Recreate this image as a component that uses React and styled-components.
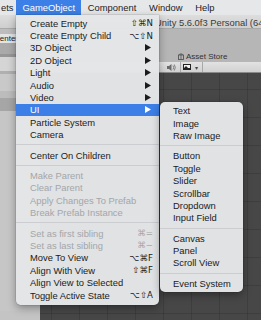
import React from "react"
import styled, { createGlobalStyle } from "styled-components"

const GlobalStyle = createGlobalStyle`
  html, body {
    margin: 0;
    padding: 0;
    background: #c4c4c4;
  }
  body {
    font-family: "Liberation Sans", Arial, sans-serif;
  }
`

const mainItems = [
  { label: "Create Empty", key: "⇧⌘N" },
  { label: "Create Empty Child", key: "⌥⇧N" },
  { label: "3D Object", sub: true },
  { label: "2D Object", sub: true },
  { label: "Light", sub: true },
  { label: "Audio", sub: true },
  { label: "Video", sub: true },
  { label: "UI", sub: true, active: true },
  { label: "Particle System" },
  { label: "Camera" },
  { sep: true },
  { label: "Center On Children" },
  { sep: true },
  { label: "Make Parent", disabled: true },
  { label: "Clear Parent", disabled: true },
  { label: "Apply Changes To Prefab", disabled: true },
  { label: "Break Prefab Instance", disabled: true },
  { sep: true },
  { label: "Set as first sibling", key: "⌘=", disabled: true },
  { label: "Set as last sibling", key: "⌘−", disabled: true },
  { label: "Move To View", key: "⌥⌘F" },
  { label: "Align With View", key: "⇧⌘F" },
  { label: "Align View to Selected" },
  { label: "Toggle Active State", key: "⌥⇧A" },
]

const uiItems = [
  { label: "Text" },
  { label: "Image" },
  { label: "Raw Image" },
  { sep: true },
  { label: "Button" },
  { label: "Toggle" },
  { label: "Slider" },
  { label: "Scrollbar" },
  { label: "Dropdown" },
  { label: "Input Field" },
  { sep: true },
  { label: "Canvas" },
  { label: "Panel" },
  { label: "Scroll View" },
  { sep: true },
  { label: "Event System" },
]

// hierarchy / toolbar strips visible at the far left, top to bottom
const leftBands = [
  { h: 5, c: "#bdbdbd" },
  { h: 9, c: "#e4e4e4", label: "Center" },
  { h: 11, c: "#aaaaaa" },
  { h: 3, c: "#979797" },
  { h: 14, c: "#d5d5d5" },
  { h: 3, c: "#b0b0b0" },
  { h: 17, c: "#c9c9c9" },
  { h: 7, c: "#bcbcbc" },
  { h: 13, c: "#a6a6a6" },
  { h: 200, c: "#c6c6c6" },
]

const Arrow = ({ light }) => (
  <svg width="6" height="7" viewBox="0 0 6 7">
    <polygon points="0,0 6,3.5 0,7" fill={light ? "#ffffff" : "#1b1b1b"} />
  </svg>
)

const Speaker = () => (
  <svg width="9" height="7" viewBox="0 0 9 7">
    <polygon points="0,2 2,2 4.5,0 4.5,7 2,5 0,5" fill="#6a6a6a" />
    <path d="M6 1.5 Q7.4 3.5 6 5.5 M7.3 0.5 Q9.2 3.5 7.3 6.5" stroke="#6a6a6a" strokeWidth="0.8" fill="none" />
  </svg>
)

const Picture = () => (
  <svg width="8" height="6" viewBox="0 0 8 6">
    <rect x="0" y="0" width="8" height="6" fill="#222" />
    <rect x="1" y="1" width="6" height="3" fill="#f2f2f2" />
    <polygon points="1,4 3,2 5,4" fill="#222" />
  </svg>
)

const Bag = () => (
  <svg width="6" height="7" viewBox="0 0 6 7">
    <rect x="0.5" y="2" width="5" height="4.5" fill="none" stroke="#555" strokeWidth="0.9" />
    <path d="M1.8 2 V1 H4.2 V2" stroke="#555" strokeWidth="0.9" fill="none" />
    <line x1="3" y1="2" x2="3" y2="6.5" stroke="#555" strokeWidth="0.8" />
  </svg>
)

const MenuList = ({ items }) =>
  items.map((it, i) =>
    it.sep ? (
      <Separator key={i} />
    ) : (
      <Row key={i} $active={it.active} $disabled={it.disabled}>
        <span>{it.label}</span>
        {it.key && <Shortcut $disabled={it.disabled}>{it.key}</Shortcut>}
        {it.sub && <Arrow light={it.active} />}
      </Row>
    )
  )

export default function App() {
  return (
    <>
      <GlobalStyle />
      <Screen>
        <MenuBar>
          <BarItem $first>ets</BarItem>
          <BarItem $active>GameObject</BarItem>
          <BarItem>Component</BarItem>
          <BarItem>Window</BarItem>
          <BarItem>Help</BarItem>
        </MenuBar>
        <Window>
          <TitleBar>Unity 5.6.0f3 Personal (64b</TitleBar>
          <Body>
            <LeftPane>
              {leftBands.map((b, i) => (
                <Band key={i} $h={b.h} $c={b.c}>
                  {b.label && <PivotLabel>{b.label}</PivotLabel>}
                </Band>
              ))}
            </LeftPane>
            <RightPane>
              <TabStrip>
                <AssetTab>
                  <Bag />
                  Asset Store
                </AssetTab>
              </TabStrip>
              <SceneToolbar>
                <ToolButton>
                  <Speaker />
                </ToolButton>
                <ToolButton>
                  <Picture />
                  <Caret>▾</Caret>
                </ToolButton>
              </SceneToolbar>
              <SceneView />
            </RightPane>
          </Body>
        </Window>

        <MainMenu>
          <MenuList items={mainItems} />
        </MainMenu>
        <SubMenu>
          <MenuList items={uiItems} />
        </SubMenu>
      </Screen>
    </>
  )
}

const Screen = styled.div`
  position: relative;
  width: 261px;
  height: 320px;
  overflow: hidden;
  display: flex;
  flex-direction: column;
  background: #c4c4c4;
`

const MenuBar = styled.div`
  height: 15px;
  flex-shrink: 0;
  display: flex;
  align-items: stretch;
  background: #e6e7e9;
  font-size: 9.4px;
  color: #1c1c1c;
`

const BarItem = styled.div`
  display: flex;
  align-items: center;
  padding: ${(p) => (p.$first ? "0 2.5px 0 1px" : "0 6.4px")};
  background: ${(p) => (p.$active ? "#3c7fe6" : "transparent")};
  color: ${(p) => (p.$active ? "#ffffff" : "#1c1c1c")};
`

const Window = styled.div`
  flex: 1;
  display: flex;
  flex-direction: column;
  min-height: 0;
`

const TitleBar = styled.div`
  height: 14px;
  flex-shrink: 0;
  display: flex;
  align-items: center;
  padding: 1px 0 0 155px;
  box-sizing: border-box;
  font-size: 9.4px;
  color: #3a3a3a;
  white-space: nowrap;
  background: linear-gradient(#dddddd, #cfcfcf);
  border-bottom: 1px solid #a9a9a9;
  overflow: hidden;
`

const Body = styled.div`
  flex: 1;
  display: flex;
  min-height: 0;
`

const LeftPane = styled.div`
  width: 40px;
  flex-shrink: 0;
  display: flex;
  flex-direction: column;
  overflow: hidden;
`

const Band = styled.div`
  height: ${(p) => p.$h}px;
  flex-shrink: 0;
  background: ${(p) => p.$c};
  display: flex;
  align-items: center;
  overflow: hidden;
`

const PivotLabel = styled.span`
  margin-left: -6px;
  font-size: 8px;
  color: #222;
`

const RightPane = styled.div`
  flex: 1;
  display: flex;
  flex-direction: column;
  min-width: 0;
`

const TabStrip = styled.div`
  height: 33px;
  flex-shrink: 0;
  background: #b6b6b6;
  display: flex;
  align-items: flex-end;
  padding-left: 138px;
`

const AssetTab = styled.div`
  height: 11px;
  display: flex;
  align-items: center;
  gap: 2px;
  font-size: 8px;
  color: #333;
`

const SceneToolbar = styled.div`
  height: 10px;
  flex-shrink: 0;
  display: flex;
  background: linear-gradient(#e2e2e2, #d2d2d2);
  border-bottom: 1px solid #8a8a8a;
  padding-left: 125px;
`

const ToolButton = styled.div`
  display: flex;
  align-items: center;
  gap: 4px;
  padding: 0 4px 0 2px;
  border-right: 1px solid #a8a8a8;
`

const Caret = styled.span`
  font-size: 6px;
  color: #444;
`

const SceneView = styled.div`
  flex: 1;
  background-color: #474747;
  background-image: linear-gradient(90deg, rgba(0, 0, 0, 0.12) 1px, transparent 1px),
    linear-gradient(rgba(0, 0, 0, 0.12) 1px, transparent 1px);
  background-size: 28px 28px;
  background-position: 11px 16px;
`

const MenuPanel = styled.div`
  position: absolute;
  display: flex;
  flex-direction: column;
  background: rgba(227, 229, 232, 0.98);
  border-radius: 0 0 5px 5px;
  box-shadow: 0 3px 9px rgba(0, 0, 0, 0.35), 0 0 0 0.5px rgba(0, 0, 0, 0.15);
  font-size: 9.4px;
`

const MainMenu = styled(MenuPanel)`
  left: 16px;
  top: 15px;
  width: 143px;
  padding: 2px 0 3.5px;
`

const SubMenu = styled(MenuPanel)`
  left: 160px;
  top: 102px;
  width: 83px;
  padding: 2.5px 0 2.5px;
  border-radius: 5px;
`

const Row = styled.div`
  height: 12.4px;
  display: flex;
  align-items: center;
  justify-content: space-between;
  padding: 0 6px 0 14px;
  white-space: nowrap;
  background: ${(p) => (p.$active ? "#3c7fe6" : "transparent")};
  color: ${(p) => (p.$active ? "#ffffff" : p.$disabled ? "#a4a6a9" : "#1b1b1b")};

  ${SubMenu} & {
    padding-left: 13px;
  }

  svg {
    margin-right: 2px;
  }
`

const Shortcut = styled.span`
  font-family: "DejaVu Sans", sans-serif;
  font-size: 8.6px;
  color: ${(p) => (p.$disabled ? "#a4a6a9" : "#1b1b1b")};
`

const Separator = styled.div`
  height: 8px;
  display: flex;
  align-items: center;

  &::after {
    content: "";
    flex: 1;
    height: 1px;
    background: #cbcdd0;
  }
`
